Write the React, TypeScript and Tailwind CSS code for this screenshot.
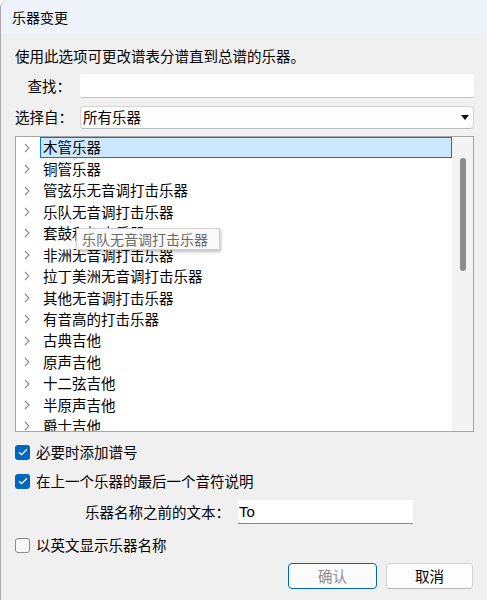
import React from 'react';

const FONT = { fontFamily: '"Noto Sans CJK SC", "Microsoft YaHei", sans-serif' };

const ITEMS = [
  '木管乐器',
  '铜管乐器',
  '管弦乐无音调打击乐器',
  '乐队无音调打击乐器',
  '套鼓和打击乐器',
  '非洲无音调打击乐器',
  '拉丁美洲无音调打击乐器',
  '其他无音调打击乐器',
  '有音高的打击乐器',
  '古典吉他',
  '原声吉他',
  '十二弦吉他',
  '半原声吉他',
  '爵士吉他',
];

function Chevron() {
  return (
    <svg width="6" height="10" viewBox="0 0 6 10" className="shrink-0">
      <path d="M1 1l4 4-4 4" fill="none" stroke="#8a8a8a" strokeWidth="1.1" />
    </svg>
  );
}

function Check({ checked }: { checked: boolean }) {
  if (!checked) {
    return <div className="w-[15px] h-[15px] rounded-[3px] border border-[#8a8a8a] bg-[#f7f7f7] shrink-0" />;
  }
  return (
    <div className="w-[15px] h-[15px] rounded-[3px] bg-[#0067c0] flex items-center justify-center shrink-0">
      <svg width="10" height="8" viewBox="0 0 10 8">
        <path d="M1 4.2l2.6 2.4L9 1.2" fill="none" stroke="#ffffff" strokeWidth="1.3" />
      </svg>
    </div>
  );
}

export default function App() {
  return (
    <div
      className="w-[487px] h-[600px] bg-[#f0f0f0] text-black text-[14.5px] flex flex-col overflow-hidden rounded-tl-[8px] border-l border-[#a8a8a8]"
      style={FONT}
    >
      {/* title bar */}
      <div className="h-[33px] shrink-0 bg-[#eef3f9] flex items-center pl-[11px] leading-none text-[14px]">乐器变更</div>

      <div className="flex flex-col pl-[13px] pr-[13px]">
        <div className="mt-[14px] h-[18px] leading-[18px] pl-[1px]">使用此选项可更改谱表分谱直到总谱的乐器。</div>

        {/* search */}
        <div className="mt-[9px] flex items-center h-[24px]">
          <div className="w-[57px] text-right leading-none">查找：</div>
          <div className="ml-[9px] flex-1 h-[24px] bg-white rounded-[3px] border-b border-[#c4c4c4]" />
        </div>

        {/* select */}
        <div className="mt-[8px] flex items-center h-[23px]">
          <div className="w-[57px] pl-[1px] leading-none whitespace-nowrap">选择自：</div>
          <div className="ml-[9px] flex-1 h-[23px] bg-[#fdfdfd] rounded-[4px] border border-[#d6d6d6] border-b-[#bcbcbc] flex items-center pl-[2px] pr-[4px]">
            <span className="flex-1 leading-none">所有乐器</span>
            <svg width="8" height="5" viewBox="0 0 8 5">
              <path d="M0 0h8L4 5z" fill="#111" />
            </svg>
          </div>
        </div>

        {/* list */}
        <div className="mt-[7px] ml-[1px] h-[296px] border border-[#a6a6a6] bg-white relative flex">
          <div className="flex-1 flex flex-col overflow-hidden">
            {ITEMS.map((name, i) => (
              <div key={name} className="h-[21.45px] shrink-0 flex items-center">
                <div className="w-[24px] h-full flex items-center justify-end pr-[10px]">
                  <Chevron />
                </div>
                <div
                  className={
                    i === 0
                      ? 'flex-1 h-full flex items-center pl-[2px] bg-[#cce8ff] border border-[#0078d7]'
                      : 'flex-1 h-full flex items-center pl-[3px]'
                  }
                >
                  <span className="leading-none">{name}</span>
                </div>
              </div>
            ))}
          </div>
          <div className="w-[21px] bg-[#f3f3f3] flex justify-center">
            <div className="mt-[21px] ml-[1px] w-[6px] h-[113px] rounded-full bg-[#8c8c8c]" />
          </div>

          {/* tooltip */}
          <div className="absolute left-[60px] top-[91px] w-[144px] h-[22px] bg-[#f9f9f9] border border-[#d0d0d0] shadow-[1px_2px_3px_rgba(0,0,0,0.25)] flex items-center pl-[5px] text-[#6a6a6a] text-[14px]">
            <span className="leading-none">乐队无音调打击乐器</span>
          </div>
        </div>

        {/* options */}
        <div className="mt-[9px] h-[22px] flex items-center gap-[6px] pl-[1px]">
          <Check checked />
          <span className="leading-none">必要时添加谱号</span>
        </div>
        <div className="mt-[7px] h-[22px] flex items-center gap-[6px] pl-[1px]">
          <Check checked />
          <span className="leading-none">在上一个乐器的最后一个音符说明</span>
        </div>
        <div className="mt-[8px] h-[24px] flex items-center">
          <span className="ml-[71px] leading-none whitespace-nowrap">乐器名称之前的文本：</span>
          <div className="ml-[8px] w-[175px] h-[24px] bg-white border-b border-[#8a8a8a] flex items-center pl-[1px]">
            <span className="leading-none" style={{ fontFamily: '"Liberation Sans", Arial, sans-serif', fontSize: '15px' }}>
              To
            </span>
          </div>
        </div>
        <div className="mt-[10px] h-[22px] flex items-center gap-[6px] pl-[1px]">
          <Check checked={false} />
          <span className="leading-none">以英文显示乐器名称</span>
        </div>

        {/* buttons */}
        <div className="mt-[7px] flex justify-end gap-[9px] pr-[1px]">
          <div className="w-[89px] h-[26px] rounded-[4px] border border-[#0067c0] bg-[#fbfbfb] flex items-center justify-center text-[#8d8d8d]">
            <span className="leading-none">确认</span>
          </div>
          <div className="w-[87px] h-[26px] rounded-[4px] border border-[#d2d2d2] border-b-[#bababa] bg-[#fdfdfd] flex items-center justify-center">
            <span className="leading-none">取消</span>
          </div>
        </div>
      </div>
    </div>
  );
}
